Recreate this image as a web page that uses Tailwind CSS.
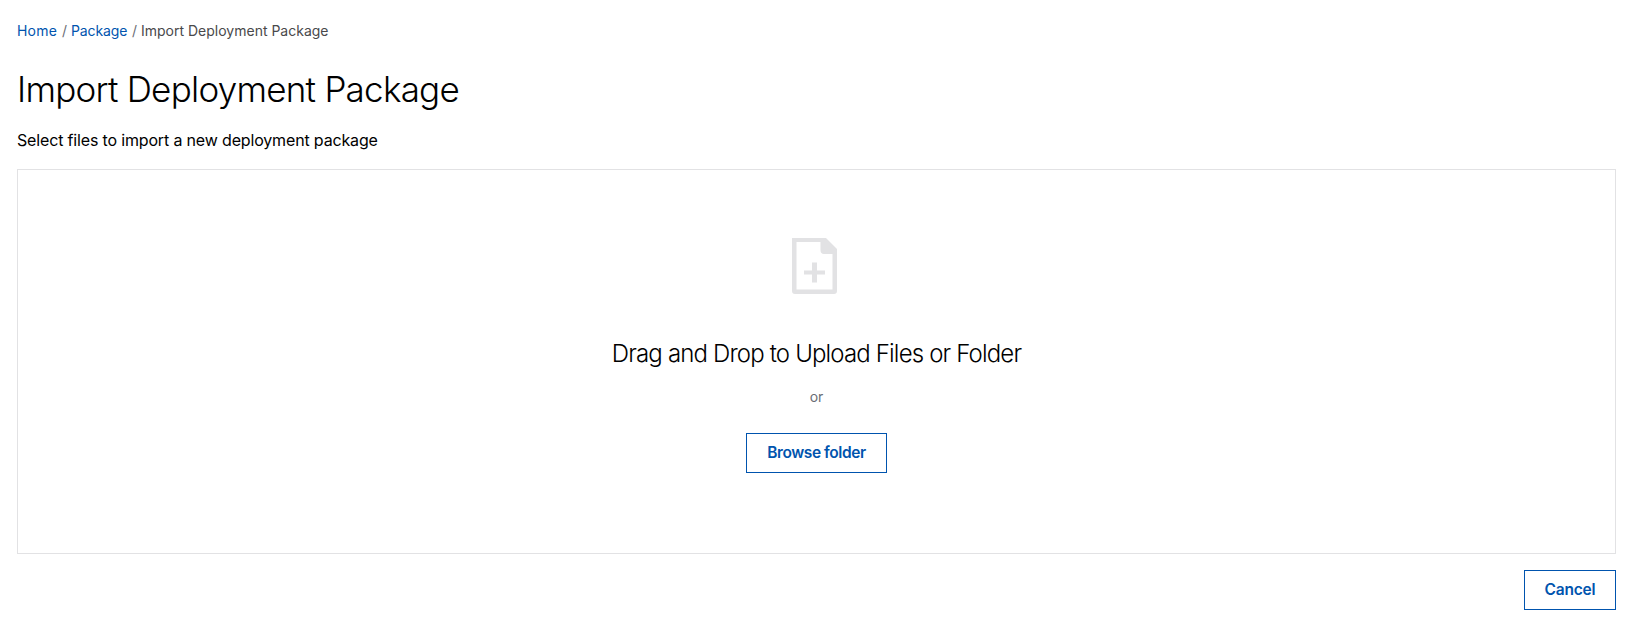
<!DOCTYPE html>
<html lang="en">
<head>
<meta charset="utf-8">
<title>Import Deployment Package</title>
<script src="https://cdn.jsdelivr.net/npm/@tailwindcss/browser@4"></script>
</head>
<body class="h-[643px] overflow-hidden bg-white pl-[17px] pr-[19px] pt-[21px] font-['Inter',sans-serif] text-black">
  <nav class="flex h-5 items-center whitespace-pre text-[14px] leading-5 text-[#49494b]">
    <a href="#" class="w-[45px] tracking-[0.2px] text-[#0054ae]">Home</a><span class="w-[9px] text-[#6a6d75]">/</span>
    <a href="#" class="w-[61px] tracking-[-0.1px] text-[#0054ae]">Package</a><span class="w-[9px] text-[#6a6d75]">/</span>
    <span>Import Deployment Package</span>
  </nav>
  <h1 class="mt-6 h-12 whitespace-nowrap text-[35px] font-[350] leading-12 tracking-[-0.75px]">Import Deployment Package</h1>
  <p class="mt-[15px] h-6 whitespace-nowrap text-[16px] leading-6 tracking-[-0.16px]">Select files to import a new deployment package</p>
  <section class="mt-[17px] flex h-[385px] flex-col items-center border border-[#e2e2e4]">
    <svg class="mr-[5px] mt-[68px] h-[56px] w-[45px]" viewBox="0 0 45 56" fill="#e2e2e4" fill-rule="evenodd">
      <path d="M0 0H34L45 11V53Q45 56 42 56H3Q0 56 0 53ZM4.500 4V51.500H40.500V16H32Q28.500 16 28.500 12V4Z"/>
      <path d="M20 24.500H25V32.500H33V36.500H25V44.500H20V36.500H12V32.500H20Z"/>
    </svg>
    <h2 class="mt-11 h-8 whitespace-nowrap text-[24px] font-[350] leading-8 tracking-[-0.84px]">Drag and Drop to Upload Files or Folder</h2>
    <p class="mt-[17px] h-5 text-[14px] leading-5 text-[#6a6d75]">or</p>
    <button class="mt-[26px] h-10 w-[141px] whitespace-nowrap border border-[#0054ae] text-[15.500px] font-semibold tracking-[-0.42px] text-[#0054ae]">Browse folder</button>
  </section>
  <div class="mt-4 flex justify-end">
    <button class="h-10 w-[92px] border border-[#0054ae] text-[15.500px] font-semibold tracking-[-0.2px] text-[#0054ae]">Cancel</button>
  </div>
</body>
</html>
